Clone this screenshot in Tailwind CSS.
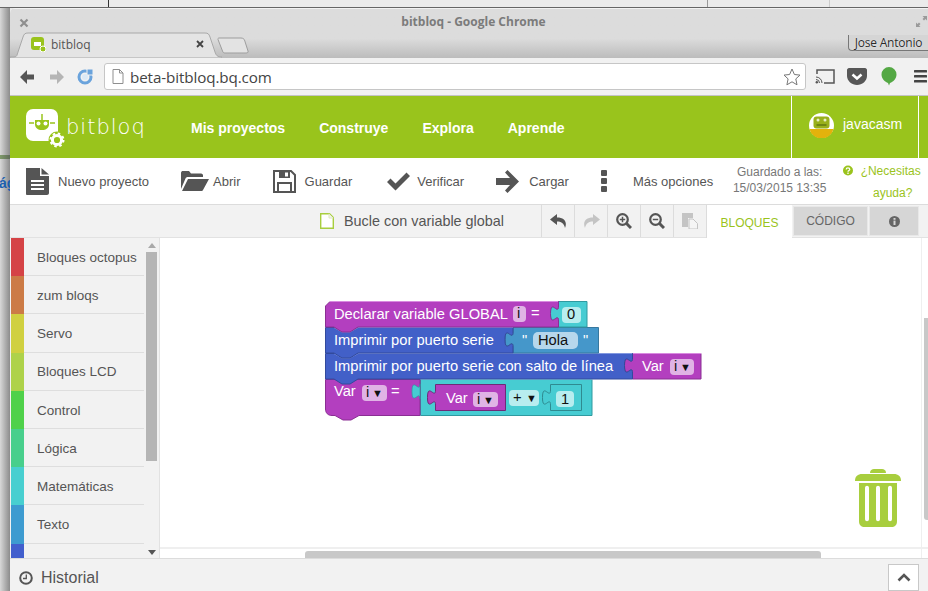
<!DOCTYPE html>
<html lang="es">
<head>
<meta charset="utf-8">
<title>bitbloq</title>
<script src="https://cdn.jsdelivr.net/npm/@tailwindcss/browser@4"></script>
</head>
<body class="w-[928px] h-[591px] overflow-hidden flex flex-col bg-[#e8e8e8] font-['Liberation_Sans',Arial,sans-serif]">
  <!-- desktop strip -->
  <div class="h-[8px] flex shrink-0 bg-[#ebebeb] border-b border-[#666]">
    <div class="w-[109px] border-r border-[#333]"></div>
    <div class="w-[599px] border-r border-[#999]"></div>
    <div class="w-[122px] border-r border-[#ccc]"></div>
  </div>
  <div class="flex flex-1 min-h-0">
    <!-- page behind the window -->
    <div class="w-[10px] shrink-0 flex flex-col bg-gradient-to-r from-[#d8d8d8] to-[#8c8c8c] overflow-hidden">
      <div class="h-[147px]"></div>
      <div class="h-[4px] bg-gradient-to-r from-[#7f9a6a] to-[#5f6b58]"></div>
      <div class="mt-[15px] text-[14px] leading-[18px] font-bold text-[#1c5fb0] -ml-[1px]">ág</div>
    </div>
    <!-- window -->
    <div class="w-[918px] flex flex-col min-w-0 rounded-tl-[5px] overflow-hidden bg-white">
      <!-- title bar + tabs -->
      <div class="h-[50px] shrink-0 relative bg-gradient-to-b from-[#dcdcdc] from-60% to-[#bcbcbc] border-t border-white/80">
        <div class="h-[26px] flex items-center justify-center pl-[9px] text-[12px] font-bold text-[#7b7b7b] font-['Open_Sans',sans-serif]">bitbloq - Google Chrome</div>
        <svg class="absolute left-[9px] top-[9px]" width="10" height="10" viewBox="0 0 10 10"><path d="M1.5 1.5l7 7M8.5 1.5l-7 7" stroke="#8e8e8e" stroke-width="2.2"/></svg>
        <svg class="absolute right-[1px] top-[7px]" width="11" height="11" viewBox="0 0 11 11" fill="#9a9a9a"><path d="M6.5 0H11V4.500L9.500 3 8 4.500 6.500 3 8 1.500zM0 6.500L1.500 8 3 6.500 4.500 8 3 9.500 4.500 11H0z"/></svg>
        <!-- tab -->
        <div class="absolute left-0 top-[23px] flex items-end h-[26px]">
          <svg class="absolute left-0 top-0" width="212" height="26" viewBox="0 0 212 26"><path d="M0 25H4C7 25 7 23 8 20L13 5C14 2 15 1 18 1H195C198 1 199 2 200 5L205 20C206 23 207 25 212 25V26H0Z" fill="#e4e4e4" stroke="#a8a8a8"/></svg>
          <svg class="absolute left-[21px] top-[5px]" width="15" height="15" viewBox="0 0 15 15"><rect x="0" y="0" width="13" height="13" rx="3" fill="#9ac31c"/><rect x="3" y="5" width="7" height="4" fill="#fff"/><circle cx="12" cy="12" r="3" fill="#9ac31c" stroke="#fff"/></svg>
          <span class="absolute left-[41px] top-[4px] text-[12px] leading-[18px] text-[#555] font-['Open_Sans',sans-serif]">bitbloq</span>
          <svg class="absolute left-[186px] top-[8px]" width="8" height="8" viewBox="0 0 8 8"><path d="M1 1l6 6M7 1l-6 6" stroke="#444" stroke-width="1.800"/></svg>
          <svg class="absolute left-[207px] top-[5px]" width="33" height="17" viewBox="0 0 33 17"><path d="M2 1H24C26 1 27 2 27.500 3L31 14C31.500 15.500 30.500 16 29 16H8C6.500 16 6 15.500 5.500 14L1 2.500C1 1.500 1 1 2 1Z" fill="#e3e3e3" stroke="#9d9d9d"/></svg>
        </div>
        <div class="absolute right-0 top-[26px] w-[80px] h-[16px] border border-t-0 border-r-0 border-[#777] rounded-bl-[4px] bg-[#d5d5d5] text-[12px] leading-[15px] text-center text-[#2a2a2a] [text-shadow:0_0_1px_#fff] tracking-[-0.2px] font-['Open_Sans',sans-serif]">Jose Antonio</div>
      </div>
      <!-- browser toolbar -->
      <div class="h-[38px] shrink-0 flex items-center bg-[#f1f1f1] border-b border-[#c4c4c4]">
        <svg class="ml-[9px]" width="16" height="16" viewBox="0 0 16 16"><path d="M8 1L1 8l7 7V10.500h7v-5H8z" fill="#555"/></svg>
        <svg class="ml-[14px]" width="16" height="16" viewBox="0 0 16 16"><path d="M8 1l7 7-7 7V10.500H1v-5h7z" fill="#b5b5b5"/></svg>
        <svg class="ml-[12px]" width="17" height="17" viewBox="0 0 17 17"><circle cx="8" cy="9" r="6" fill="none" stroke="#6aa3dc" stroke-width="3"/><path d="M10 1l6 0 0 6-6 0z" fill="#6aa3dc" stroke="#f1f1f1"/><circle cx="8" cy="9" r="3" fill="#dbe9f6"/></svg>
        <div class="ml-[10px] w-[702px] h-[27px] flex items-center bg-white border border-[#c6c6c6] rounded-[3px]">
          <svg class="ml-[7px]" width="12" height="15" viewBox="0 0 12 15"><path d="M1 .5H7.500L11 4V14.500H1zM7.500.5V4H11" fill="#fff" stroke="#8f8f8f"/></svg>
          <span class="ml-[6px] text-[15.200px] leading-[22px] text-[#444] font-['Open_Sans',sans-serif] tracking-[-0.1px]">beta-bitbloq.bq.com</span>
          <svg class="ml-auto mr-[4px]" width="18" height="18" viewBox="0 0 18 18"><path d="M9 1l2.400 5.500 5.600.6-4.200 3.800 1.200 5.900L9 13.800 3.900 16.800l1.200-5.900L1 7.100l5.600-.6z" fill="#fff" stroke="#777"/></svg>
        </div>
        <svg class="ml-[9px]" width="20" height="15" viewBox="0 0 20 15"><path d="M2 5V1H19V14H9" fill="none" stroke="#555" stroke-width="1.500"/><path d="M1 8a6 6 0 0 1 6 6M1 10.500a3.500 3.500 0 0 1 3.500 3.500" fill="none" stroke="#555"/><circle cx="1.800" cy="13.200" r="1.200" fill="#555"/></svg>
        <svg class="ml-[12px]" width="20" height="17" viewBox="0 0 20 17"><path d="M2 0H18C19 0 20 1 20 2V8C20 13 15 17 10 17S0 13 0 8V2C0 1 1 0 2 0Z" fill="#575757"/><path d="M5.500 6.500L10 10.500 14.500 6.500" fill="none" stroke="#fff" stroke-width="2.500"/></svg>
        <svg class="ml-[14px]" width="16" height="19" viewBox="0 0 16 19"><path d="M8 0a7.500 7.500 0 0 1 7.500 7.500C15.500 11.500 12 15 9 16L8 18.500 7 16C4 15 .5 11.500 .5 7.500A7.500 7.500 0 0 1 8 0Z" fill="#54a844"/></svg>
        <svg class="ml-[17px]" width="13" height="13" viewBox="0 0 13 13" fill="#444"><rect width="13" height="2.600" rx=".5"/><rect y="5" width="13" height="2.600" rx=".5"/><rect y="10" width="13" height="2.600" rx=".5"/></svg>
      </div>
      <!-- green nav -->
      <div class="h-[62px] shrink-0 flex bg-[#99c41c] text-white">
        <div class="w-[781px] flex items-center relative">
          <svg class="absolute left-[16px] top-[13px]" width="40" height="40" viewBox="0 0 40 40">
            <rect width="32" height="32" rx="7" fill="#fff"/>
            <path d="M9 11h14l0 4c0 4-3 6-7 6s-7-2-7-6z" fill="#99c41c"/>
            <path d="M16 5v6M3 14h5M24 14h5" stroke="#99c41c" stroke-width="1.500"/>
            <circle cx="12.500" cy="14.500" r="2" fill="#fff"/><circle cx="19.500" cy="14.500" r="2" fill="#fff"/>
            <circle cx="31" cy="31" r="8.500" fill="#99c41c"/>
            <circle cx="31" cy="31" r="4.600" fill="none" stroke="#fff" stroke-width="3"/>
            <circle cx="31" cy="31" r="6.500" fill="none" stroke="#fff" stroke-width="2" stroke-dasharray="2.500 2.600"/>
          </svg>
          <span class="absolute left-[56px] top-[16px] text-[21px] leading-[30px] font-['DejaVu_Sans',sans-serif] font-extralight tracking-[1px]">bitbloq</span>
          <nav class="ml-[181px] pt-[1px] flex gap-[34px] text-[14px] leading-[18px] font-bold">
            <span>Mis proyectos</span><span>Construye</span><span>Explora</span><span>Aprende</span>
          </nav>
        </div>
        <div class="w-[128px] flex items-center border-x border-white">
          <svg class="ml-[17px] mb-[4px]" width="25" height="25" viewBox="0 0 25 25">
            <circle cx="12.500" cy="12.500" r="12.500" fill="#fff"/>
            <path d="M.4 16H24.600A12.500 12.500 0 0 1 .4 16Z" fill="#e3b20c"/>
            <rect x="4.500" y="3.500" width="16" height="12" rx="3" fill="#99b01c"/>
            <circle cx="9" cy="7" r="1.500" fill="#e8eec8"/><circle cx="16" cy="7" r="1.500" fill="#e8eec8"/>
            <rect x="7.500" y="11" width="10" height="2" fill="#6f8514"/>
          </svg>
          <span class="ml-[9px] mb-[6px] text-[14px] leading-[18px]">javacasm</span>
        </div>
        <div class="flex-1"></div>
      </div>
      <!-- actions -->
      <div class="h-[47px] shrink-0 flex items-center relative bg-white border-b border-[#dcdcdc] text-[13px] leading-[16px] text-[#555]">
        <svg class="ml-[16px]" width="23" height="27" viewBox="0 0 23 27"><path d="M0 0H14V8H23V25C23 26 22 27 21 27H1C.5 27 0 26.500 0 26Z" fill="#555"/><path d="M15.500 0L23 6.500H15.500Z" fill="#555"/><path d="M5 13H18M5 17H18M5 21H18" stroke="#fff" stroke-width="2"/></svg>
        <span class="ml-[9px] pt-[1px]">Nuevo proyecto</span>
        <svg class="ml-[32px]" width="28" height="22" viewBox="0 0 28 22"><path d="M0 19V3C0 1.500 1 1 2 1H8L10 3.500H20C21.500 3.500 22 4.500 22 5.500V7H7C5.500 7 5 7.500 4.500 8.500Z" fill="#555"/><path d="M7 9H28L22 20C21.500 21 21 21 20 21H1Z" fill="#555"/></svg>
        <span class="ml-[4px] pt-[1px]">Abrir</span>
        <svg class="ml-[32px]" width="23" height="23" viewBox="0 0 23 23"><path d="M1 1H18L22 5V22H1Z" fill="none" stroke="#555" stroke-width="2"/><path d="M6 1H17V8H6Z" fill="#555"/><rect x="12" y="2.500" width="3" height="4" fill="#fff"/><path d="M5 13H18V22H5Z" fill="none" stroke="#555" stroke-width="2"/></svg>
        <span class="ml-[9px] pt-[1px]">Guardar</span>
        <svg class="ml-[35px]" width="23" height="19" viewBox="0 0 23 19"><path d="M0 10L3.500 6.500 8.500 11.500 19.500 .5 23 4 8.500 18.500Z" fill="#555"/></svg>
        <span class="ml-[7px] pt-[1px]">Verificar</span>
        <svg class="ml-[32px]" width="23" height="23" viewBox="0 0 23 23"><path d="M11.500 0L23 11.500 11.500 23 9 20.500 14 15H0V8H14L9 2.500Z" fill="#555"/></svg>
        <span class="ml-[10px] pt-[1px]">Cargar</span>
        <svg class="ml-[32px]" width="6" height="22" viewBox="0 0 6 22" fill="#555"><rect width="6" height="6" rx="1"/><rect y="8" width="6" height="6" rx="1"/><rect y="16" width="6" height="6" rx="1"/></svg>
        <span class="ml-[26px] pt-[1px]">Más opciones</span>
        <div class="ml-[18.500px] w-[96px] whitespace-nowrap text-center text-[12px] leading-[16px] text-[#777] mt-[-2px]"><div>Guardado a las:</div><div>15/03/2015 13:35</div></div>
        <div class="ml-[15px] w-[78px] text-center text-[12px] leading-[22px] text-[#9ac31c] mt-[1px]">
          <div class="flex items-center justify-center gap-[8px]"><svg width="11" height="11" viewBox="0 0 11 11"><circle cx="5.500" cy="5.500" r="5.500" fill="#9ac31c"/><path d="M3.500 4.300C3.500 2.200 7.500 2.200 7.500 4.300 7.500 5.600 5.500 5.500 5.500 7" fill="none" stroke="#fff" stroke-width="1.400"/><rect x="4.700" y="7.800" width="1.600" height="1.500" fill="#fff"/></svg><span>¿Necesitas</span></div>
          <div class="pl-[22px]">ayuda?</div>
        </div>
      </div>
      <!-- project bar -->
      <div class="h-[33px] shrink-0 flex bg-[#f2f2f2] border-b border-[#e2e2e2] text-[#555]">
        <div class="w-[531px] flex items-center pl-[310px]">
          <svg width="14" height="16" viewBox="0 0 14 16"><path d="M.7.7H9.500L13.300 4.500V15.300H.7Z" fill="#fff" stroke="#a8ce3e" stroke-width="1.400"/><path d="M9 .7V5H13.300" fill="#f3f3f3" stroke="#dfe8bd"/></svg>
          <span class="ml-[10px] text-[14.400px] leading-[18px] whitespace-nowrap">Bucle con variable global</span>
        </div>
        <div class="w-[33px] flex items-center justify-center border-l border-[#dcdcdc]"><svg width="17" height="14" viewBox="0 0 17 14"><path d="M7 0L0 5.500 7 11V7.500C11 7.500 14 9 15 14 17.500 8 14.500 3.500 7 3.500Z" fill="#555"/></svg></div>
        <div class="w-[33px] flex items-center justify-center border-l border-[#dcdcdc]"><svg width="17" height="14" viewBox="0 0 17 14"><path d="M10 0L17 5.500 10 11V7.500C6 7.500 3 9 2 14-.5 8 2.500 3.500 10 3.500Z" fill="#c4c4c4"/></svg></div>
        <div class="w-[33px] flex items-center justify-center border-l border-[#dcdcdc]"><svg width="16" height="16" viewBox="0 0 16 16"><circle cx="6.500" cy="6.500" r="5.300" fill="none" stroke="#555" stroke-width="2.200"/><path d="M10.500 10.500L15 15" stroke="#555" stroke-width="3"/><path d="M3.800 6.500H9.200M6.500 3.800V9.200" stroke="#555" stroke-width="1.500"/></svg></div>
        <div class="w-[33px] flex items-center justify-center border-l border-[#dcdcdc]"><svg width="16" height="16" viewBox="0 0 16 16"><circle cx="6.500" cy="6.500" r="5.300" fill="none" stroke="#555" stroke-width="2.200"/><path d="M10.500 10.500L15 15" stroke="#555" stroke-width="3"/><path d="M3.800 6.500H9.200" stroke="#555" stroke-width="1.500"/></svg></div>
        <div class="w-[33px] flex items-center justify-center border-l border-[#dcdcdc]"><svg width="16" height="16" viewBox="0 0 16 16"><path d="M0 0H11V5H6V14H0Z" fill="#c4c4c4"/><path d="M7 6H11L15.500 10.500V16H7Z" fill="#f5f5f5" stroke="#c4c4c4"/></svg></div>
        <div class="w-[86px] -mb-px bg-white border-l border-[#dcdcdc] flex items-center justify-center text-[12px] text-[#9ac31c] pt-[2px]">BLOQUES</div>
        <div class="w-[75px] ml-[1px] my-[1px] bg-[#d6d6d6] border border-[#e8e8e8] flex items-center justify-center text-[12px] text-[#666]">CÓDIGO</div>
        <div class="w-[50px] ml-[1px] my-[1px] bg-[#d6d6d6] border border-[#e8e8e8] flex items-center justify-center"><svg width="11" height="11" viewBox="0 0 11 11"><circle cx="5.500" cy="5.500" r="5.500" fill="#666"/><rect x="4.500" y="2" width="2" height="1.800" fill="#d6d6d6"/><rect x="4.500" y="4.600" width="2" height="4.400" fill="#d6d6d6"/></svg></div>
        <div class="flex-1"></div>
      </div>
      <!-- main -->
      <div class="flex-1 min-h-0 flex relative">
        <!-- toolbox -->
        <div class="w-[150px] shrink-0 flex bg-[#f2f2f2] border-r border-[#e2e2e2] overflow-hidden pl-[1px]">
          <div class="w-[133px] flex flex-col text-[13.500px] text-[#555]">
            <div class="h-[38.200px] shrink-0 flex"><div class="w-[13px] bg-[#d54346]"></div><div class="flex-1 flex items-center pl-[13px] pt-[2.600px] border-b border-[#dedede]">Bloques octopus</div></div>
            <div class="h-[38.200px] shrink-0 flex"><div class="w-[13px] bg-[#cc7b46]"></div><div class="flex-1 flex items-center pl-[13px] pt-[2.600px] border-b border-[#dedede]">zum bloqs</div></div>
            <div class="h-[38.200px] shrink-0 flex"><div class="w-[13px] bg-[#d0d040]"></div><div class="flex-1 flex items-center pl-[13px] pt-[2.600px] border-b border-[#dedede]">Servo</div></div>
            <div class="h-[38.200px] shrink-0 flex"><div class="w-[13px] bg-[#aed24a]"></div><div class="flex-1 flex items-center pl-[13px] pt-[2.600px] border-b border-[#dedede]">Bloques LCD</div></div>
            <div class="h-[38.200px] shrink-0 flex"><div class="w-[13px] bg-[#4fd14a]"></div><div class="flex-1 flex items-center pl-[13px] pt-[2.600px] border-b border-[#dedede]">Control</div></div>
            <div class="h-[38.200px] shrink-0 flex"><div class="w-[13px] bg-[#48cf8c]"></div><div class="flex-1 flex items-center pl-[13px] pt-[2.600px] border-b border-[#dedede]">Lógica</div></div>
            <div class="h-[38.200px] shrink-0 flex"><div class="w-[13px] bg-[#48cfd0]"></div><div class="flex-1 flex items-center pl-[13px] pt-[2.600px] border-b border-[#dedede]">Matemáticas</div></div>
            <div class="h-[38.200px] shrink-0 flex"><div class="w-[13px] bg-[#3d9bd0]"></div><div class="flex-1 flex items-center pl-[13px] pt-[2.600px] border-b border-[#dedede]">Texto</div></div>
            <div class="h-[38.200px] shrink-0 flex"><div class="w-[13px] bg-[#425fcd]"></div><div class="flex-1"></div></div>
          </div>
          <!-- toolbox scrollbar -->
          <div class="w-[14px] ml-[1px] flex flex-col items-start">
            <svg class="mt-[5px] ml-[3px]" width="8" height="5" viewBox="0 0 8 5"><path d="M4 0L8 5H0Z" fill="#a9a9a9"/></svg>
            <div class="mt-[4px] ml-[1px] w-[11px] h-[209px] bg-[#b5b5b5]"></div>
            <svg class="mt-[89px] ml-[3px]" width="8" height="5" viewBox="0 0 8 5"><path d="M0 0H8L4 5Z" fill="#555"/></svg>
          </div>
        </div>
        <!-- canvas -->
        <div class="flex-1 min-w-0 relative bg-white">
          <svg class="absolute left-[155px] top-[57px]" width="400" height="130" viewBox="315 295 400 130" font-family="'Liberation Sans',Arial,sans-serif" font-size="14.700">
            <!-- block 4 -->
            <path d="M420.500 379.500H592V415.500H420.500Z" fill="#47ccd2" stroke="#2f9aa0"/>
            <path d="M420.500 379.500H592" stroke="#8be3e6"/>
            <path d="M325.500 379.500H420V415.500H359L351 420 343 420 335 415.500H332C328 415.500 325.500 413 325.500 409Z" fill="#b33fbf" stroke="#8a2f93"/>
            <path d="M420 399c0-10-8 8-8-7.500s8 2.500 8-7.500Z" fill="#47ccd2" stroke="#2f9aa0" stroke-width=".7"/>
            <text x="334" y="396" fill="#fff">Var</text>
            <rect x="362" y="385" width="25" height="16" rx="4" fill="#e0b3e5"/>
            <text x="366" y="397" fill="#111">i</text><text x="372" y="397" fill="#111" font-size="11">▼</text>
            <text x="391" y="396" fill="#fff">=</text>
            <!-- inner Var -->
            <path d="M435.500 384.500H505.500V410.500H435.500V405c0-10-8 8-8-7.500s8 2.500 8-7.500Z" fill="#b33fbf" stroke="#6e2a78"/>
            <text x="446" y="403" fill="#fff">Var</text>
            <rect x="473" y="392" width="25" height="15" rx="4" fill="#e0b3e5"/>
            <text x="477" y="404" fill="#111">i</text><text x="483" y="404" fill="#111" font-size="11">▼</text>
            <rect x="509" y="390" width="30" height="16" rx="4" fill="#b8edef"/>
            <text x="513" y="402" fill="#111">+</text><text x="526" y="402" fill="#111" font-size="11">▼</text>
            <path d="M550.500 384.500H581.500V410.500H550.500V405c0-10-8 8-8-7.500s8 2.500 8-7.500Z" fill="#47ccd2" stroke="#2f8a90"/>
            <rect x="556" y="391" width="18" height="16" rx="4" fill="#b8edef"/>
            <text x="561" y="404" fill="#111">1</text>
            <!-- block 3 -->
            <path d="M632.500 353.500H701V379H632.500V373c0-10-8 8-8-7.500s8 2.500 8-7.500Z" fill="#b33fbf" stroke="#8a2f93"/>
            <path d="M632.500 353.500H701" stroke="#d98ae0"/>
            <text x="642" y="371" fill="#fff">Var</text>
            <rect x="670" y="359" width="24" height="16" rx="4" fill="#e0b3e5"/>
            <text x="674" y="371" fill="#111">i</text><text x="680" y="371" fill="#111" font-size="11">▼</text>
            <path d="M325.500 353.500H632.500V358c0 10-8-8-8 7.500s8-2.500 8 7.500V379H358L350 384H342L334 379H325.500Z" fill="#4260c8" stroke="#324a9c"/>
            <path d="M334 353.500L342 358H350L358 353.500H632" fill="none" stroke="#8298e0"/>
            <text x="334" y="371" fill="#fff">Imprimir por puerto serie con salto de línea</text>
            <!-- block 2 -->
            <path d="M513 327.500H598.500V353H513V347c0-10-8 8-8-7.500s8 2.500 8-7.500Z" fill="#4597ca" stroke="#37789f"/>
            <text x="522" y="345" fill="#fff">"</text>
            <rect x="533" y="332" width="45" height="17" rx="5" fill="#b6d7ec"/>
            <text x="538" y="345" fill="#111">Hola</text>
            <text x="583" y="345" fill="#fff">"</text>
            <path d="M325.500 327.500H513V332c0 10-8-8-8 7.500s8-2.500 8 7.500V353H358L350 358H342L334 353H325.500Z" fill="#4260c8" stroke="#324a9c"/>
            <path d="M334 327.500L342 332H350L358 327.500H513" fill="none" stroke="#8298e0"/>
            <text x="334" y="345" fill="#fff">Imprimir por puerto serie</text>
            <!-- block 1 -->
            <path d="M558.500 301.500H587V327H558.500V321c0-10-8 8-8-7.500s8 2.500 8-7.500Z" fill="#47ccd2" stroke="#2f9aa0"/>
            <rect x="562" y="307" width="19" height="16" rx="4" fill="#b8edef"/>
            <text x="567" y="319" fill="#111">0</text>
            <path d="M330 301.500H558.500V306c0 10-8-8-8 7.500s8-2.500 8 7.500V327H358L350 332H342L334 327H325.500V306Z" fill="#b33fbf" stroke="#8a2f93"/>
            <path d="M330 301.500H558" fill="none" stroke="#d98ae0"/>
            <text x="334" y="319" fill="#fff">Declarar variable GLOBAL</text>
            <rect x="513" y="306" width="13" height="16" rx="4" fill="#e0b3e5"/>
            <text x="517" y="318" fill="#111">i</text>
            <text x="531" y="318" fill="#fff">=</text>
          </svg>
          <!-- trash -->
          <svg class="absolute left-[695px] top-[231px]" width="46" height="58" viewBox="0 0 46 58" fill="#a8ce3e">
            <path d="M15 4C15 1 17 0 19 0H27C29 0 31 1 31 4Z"/>
            <path d="M0 12C0 7 3 5 7 5H39C43 5 46 7 46 12Z"/>
            <path fill-rule="evenodd" d="M4 14H42V52C42 56 40 58 36 58H10C6 58 4 56 4 52ZM10 19V50C10 53 14 53 14 50V19C14 16 10 16 10 19ZM21 19V50C21 53 25 53 25 50V19C25 16 21 16 21 19ZM33 19V50C33 53 37 53 37 50V19C37 16 33 16 33 19Z"/>
          </svg>
          <!-- canvas scrollbars -->
          <div class="absolute left-0 right-0 bottom-[9px] h-[2px] bg-[#efefef]"></div>
          <div class="absolute left-[145px] bottom-0 w-[516px] h-[7px] rounded-t-[3px] bg-[#c8c8c8]"></div>
          <div class="absolute right-[6px] top-0 bottom-0 w-px bg-[#efefef]"></div>
          <div class="absolute right-0 top-[80px] w-[4px] h-[202px] rounded-bl-[3px] bg-[#c8c8c8]"></div>
        </div>
      </div>
      <!-- footer -->
      <div class="h-[33px] shrink-0 flex items-center bg-[#f2f2f2] border-t border-[#dcdcdc] text-[#555]">
        <svg class="ml-[9px] mt-[6px]" width="14" height="14" viewBox="0 0 14 14"><circle cx="7" cy="7" r="5.800" fill="none" stroke="#555" stroke-width="2"/><path d="M7.300 3.500V7.500H4" fill="none" stroke="#555" stroke-width="1.300"/></svg>
        <span class="ml-[8px] mt-[5px] text-[16px] leading-[20px]">Historial</span>
        <div class="ml-auto mr-[9px] w-[31px] h-[27px] mt-[4px] flex items-center justify-center bg-white border border-[#c8c8c8]">
          <svg width="14" height="9" viewBox="0 0 14 9"><path d="M1.500 7.500L7 2 12.500 7.500" fill="none" stroke="#555" stroke-width="2.600"/></svg>
        </div>
      </div>
    </div>
  </div>
</body>
</html>
